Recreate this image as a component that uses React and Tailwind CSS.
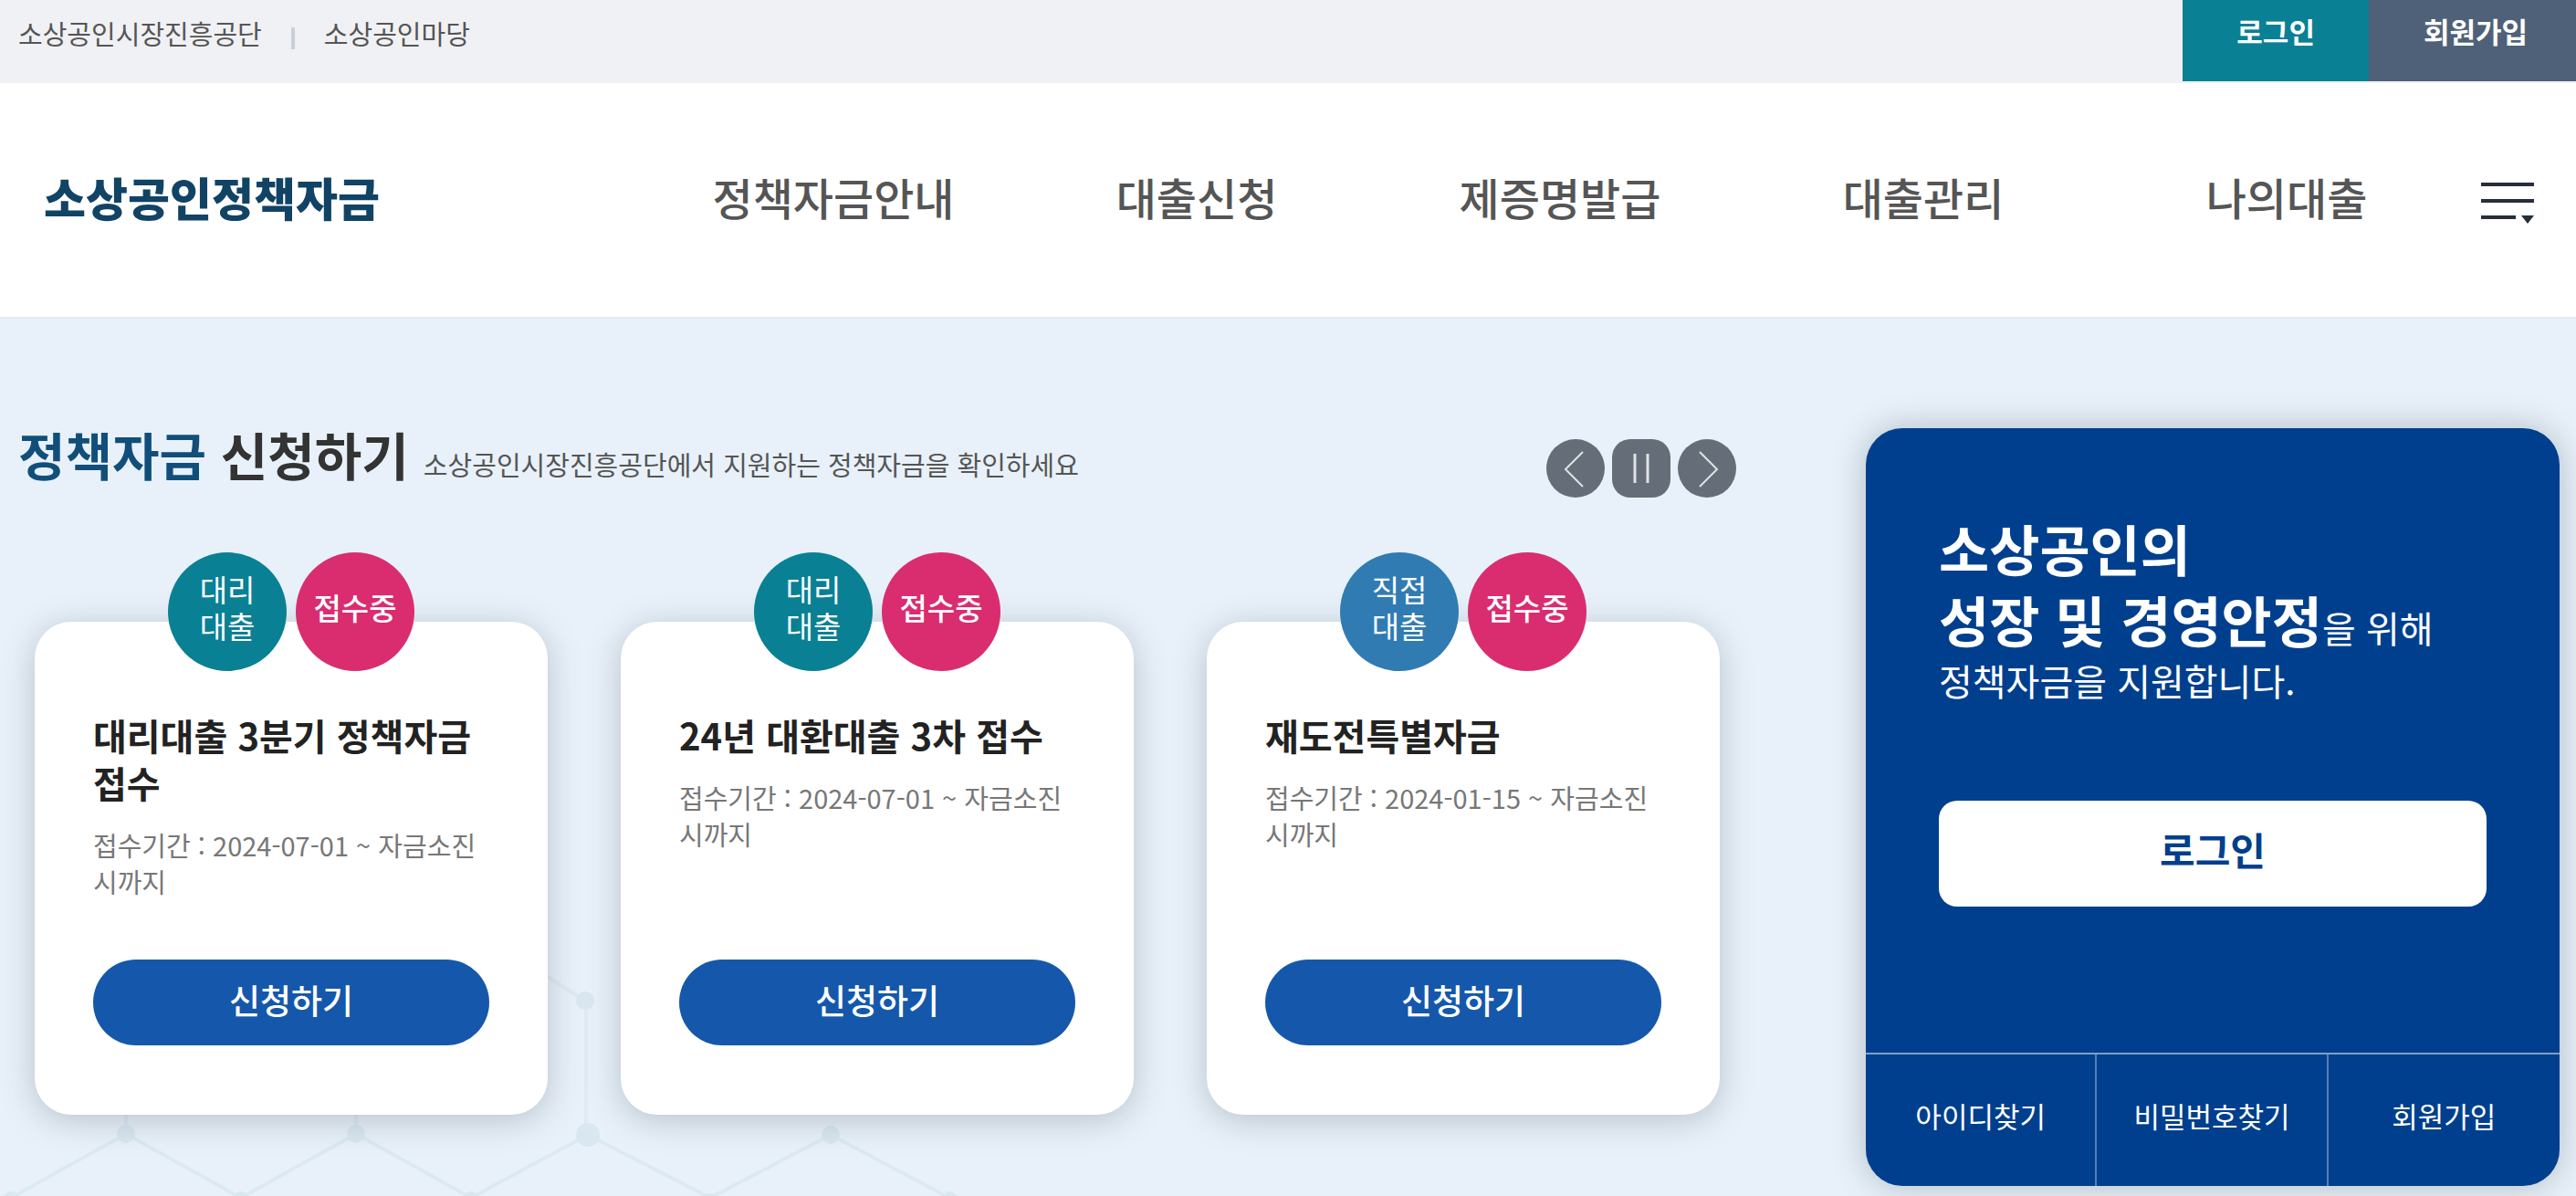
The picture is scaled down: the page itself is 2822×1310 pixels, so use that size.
const NAV = ["정책자금안내", "대출신청", "제증명발급", "대출관리", "나의대출"];

const FUNDS = [
  {
    kind: ["대리", "대출"],
    kindColor: "bg-[#0a8094]",
    title: "대리대출 3분기 정책자금 접수",
    period: "접수기간 : 2024-07-01 ~ 자금소진시까지",
  },
  {
    kind: ["대리", "대출"],
    kindColor: "bg-[#0a8094]",
    title: "24년 대환대출 3차 접수",
    period: "접수기간 : 2024-07-01 ~ 자금소진시까지",
  },
  {
    kind: ["직접", "대출"],
    kindColor: "bg-[#317bb3]",
    title: "재도전특별자금",
    period: "접수기간 : 2024-01-15 ~ 자금소진시까지",
  },
];

const MEMBER_LINKS = ["아이디찾기", "비밀번호찾기", "회원가입"];

function TopBar() {
  return (
    <div className="flex h-[91px] items-start justify-between bg-[#f0f1f4] pl-5">
      <div className="flex items-center pt-4 text-[29px] leading-10 text-[#555]">
        <a href="#semas">소상공인시장진흥공단</a>
        <span className="mx-8 mt-3 h-6 w-1 bg-[#c6d1dc]" />
        <a href="#madang">소상공인마당</a>
      </div>
      <div className="flex text-[31px] leading-10 font-bold text-white">
        <a href="#login" className="h-[89px] bg-[#0a8094] px-[59px] pt-3.5">
          로그인
        </a>
        <a href="#join" className="h-[89px] bg-[#4f6178] pr-[53px] pl-[60px] pt-3.5">
          회원가입
        </a>
      </div>
    </div>
  );
}

function MenuIcon() {
  return (
    <svg width="58" height="46" viewBox="0 0 58 46" fill="#262f3a" aria-hidden="true">
      <rect x="0" y="0" width="58" height="4" />
      <rect x="0" y="18" width="58" height="4" />
      <rect x="0" y="36" width="38" height="4" />
      <path d="M44 36h14l-7 9z" />
    </svg>
  );
}

function Header() {
  return (
    <header className="flex h-[258px] items-center border-b-2 border-[#e6e8ea] bg-white pb-2 pl-12">
      <a href="#home" className="w-[666px] shrink-0 text-[50px] leading-[60px] font-black text-[#114365]">
        소상공인정책자금
      </a>
      <nav className="grid flex-1 grid-cols-5 text-center text-[48px] leading-[60px] font-medium text-[#555]">
        {NAV.map((item) => (
          <a key={item} href="#menu">
            {item}
          </a>
        ))}
      </nav>
      <button type="button" aria-label="전체메뉴" className="mt-4 mr-[46px] ml-3.5">
        <MenuIcon />
      </button>
    </header>
  );
}

function SlideControls() {
  return (
    <div className="mt-3 flex gap-2">
      <button type="button" aria-label="이전" className="size-16 rounded-full bg-[#656e78]">
        <svg viewBox="0 0 64 64" fill="none" stroke="#dfe2e5" strokeWidth="2">
          <path d="M40 14 21 33l19 19" />
        </svg>
      </button>
      <button type="button" aria-label="정지" className="size-16 rounded-[20px] bg-[#656e78]">
        <svg viewBox="0 0 64 64" fill="none" stroke="#dfe2e5" strokeWidth="3">
          <path d="M25 16v32M39 16v32" />
        </svg>
      </button>
      <button type="button" aria-label="다음" className="size-16 rounded-full bg-[#656e78]">
        <svg viewBox="0 0 64 64" fill="none" stroke="#dfe2e5" strokeWidth="2">
          <path d="m24 14 19 19-19 19" />
        </svg>
      </button>
    </div>
  );
}

function FundCard({ fund }) {
  return (
    <li className="flex flex-col rounded-[40px] bg-white px-16 pb-[76px] shadow-[0_6px_36px_rgba(60,75,90,0.28)]">
      <div className="-mt-[76px] flex justify-center gap-2.5 text-center text-[33px] leading-10 text-white">
        <span className={`flex size-[130px] items-center justify-center rounded-full pb-2.5 ${fund.kindColor}`}>
          <span>
            {fund.kind[0]}
            <br />
            {fund.kind[1]}
          </span>
        </span>
        <span className="flex size-[130px] items-center justify-center rounded-full bg-[#d92d70] pb-2.5 font-medium">
          접수중
        </span>
      </div>
      <h3 className="mt-11 text-[40px] leading-[52px] font-bold text-[#222]">{fund.title}</h3>
      <p className="mt-[22px] mb-[66px] text-[29px] leading-10 text-[#777]">{fund.period}</p>
      <button
        type="button"
        className="mt-auto h-[94px] rounded-full bg-[#1558ab] pb-1 text-[37px] font-medium text-white"
      >
        신청하기
      </button>
    </li>
  );
}

function LoginPanel() {
  return (
    <aside className="w-[760px] shrink-0 self-start overflow-hidden rounded-[40px] bg-[#003f8e] pt-[92px] text-white shadow-[0_0_36px_rgba(60,75,90,0.32)]">
      <div className="px-20">
        <p className="text-[60px] leading-[78px]">
          <strong className="font-bold">소상공인의</strong>
          <br />
          <strong className="font-bold">성장 및 경영안정</strong>
          <span className="text-[40px] leading-none">을 위해</span>
        </p>
        <p className="text-[40px] leading-[56px]">정책자금을 지원합니다.</p>
        <button
          type="button"
          className="mt-[104px] h-[116px] w-full rounded-[20px] bg-white pb-3 text-[42px] font-bold text-[#003f8e]"
        >
          로그인
        </button>
      </div>
      <div className="mt-40 grid grid-cols-3 divide-x-2 divide-[#5580b5] border-t-2 border-[#7f9fc6] text-[31px]">
        {MEMBER_LINKS.map((item) => (
          <a key={item} href="#member" className="flex h-36 items-center justify-center pb-2.5">
            {item}
          </a>
        ))}
      </div>
    </aside>
  );
}

function Network() {
  return (
    <svg
      className="pointer-events-none absolute bottom-0 left-0"
      width="1120"
      height="260"
      viewBox="0 0 1120 260"
      fill="none"
      stroke="#dce9f3"
      strokeWidth="4"
      aria-hidden="true"
    >
      <path d="M138 192V0M390 192V0M641 46 600 20M642 46v146" stroke="#e0e9f4" />
      <path d="M12 262 138 192l126 70 126-70 126 70 128-69 134 69 132-69 130 69" />
      <g fill="#d8e7f0" stroke="none">
        <circle cx="641" cy="46" r="10" />
        <circle cx="138" cy="192" r="10" />
        <circle cx="390" cy="192" r="10" />
        <circle cx="644" cy="193" r="13" />
        <circle cx="910" cy="193" r="10" />
        <circle cx="12" cy="264" r="9" />
        <circle cx="264" cy="264" r="9" />
        <circle cx="516" cy="264" r="9" />
        <circle cx="778" cy="266" r="9" />
        <circle cx="1040" cy="264" r="9" />
      </g>
    </svg>
  );
}

export default function App() {
  return (
    <div
      lang="ko"
      className="flex min-h-screen flex-col bg-white font-['Noto_Sans_CJK_KR','Noto_Sans',sans-serif]"
    >
      <TopBar />
      <Header />
      <main className="relative flex-1 bg-[#e8f1f9] pt-[120px] pb-2">
        <Network />
        <div className="relative flex gap-[142px] pr-[18px] pl-5">
          <section className="min-w-0 flex-1">
            <div className="flex items-start justify-between">
              <div className="flex items-baseline gap-4">
                <h2 className="text-[56px] leading-[56px] font-bold text-[#333]">
                  <span className="text-[#114f7a]">정책자금</span> 신청하기
                </h2>
                <p className="text-[29px] text-[#555]">
                  소상공인시장진흥공단에서 지원하는 정책자금을 확인하세요
                </p>
              </div>
              <SlideControls />
            </div>
            <ul className="mt-[136px] grid grid-cols-3 gap-20 px-[18px]">
              {FUNDS.map((fund) => (
                <FundCard key={fund.title} fund={fund} />
              ))}
            </ul>
          </section>
          <LoginPanel />
        </div>
      </main>
    </div>
  );
}
